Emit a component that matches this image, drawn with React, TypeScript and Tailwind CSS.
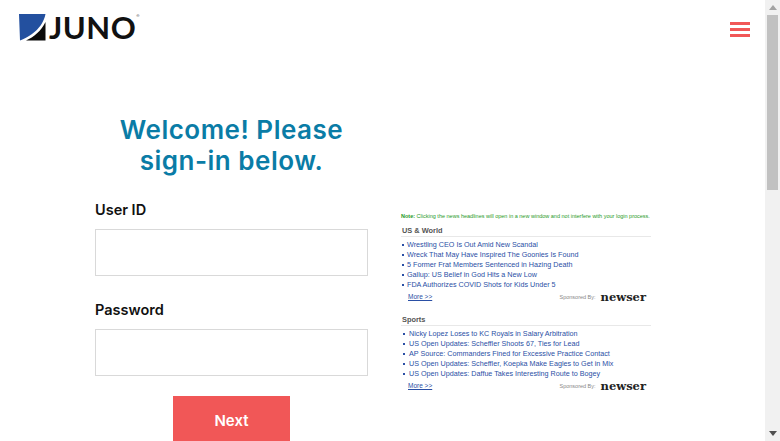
// Juno sign-in page with news headlines panel
const usWorld = [
  'Wrestling CEO Is Out Amid New Scandal',
  'Wreck That May Have Inspired The Goonies Is Found',
  '5 Former Frat Members Sentenced in Hazing Death',
  'Gallup: US Belief in God Hits a New Low',
  'FDA Authorizes COVID Shots for Kids Under 5',
];

const sports = [
  'Nicky Lopez Loses to KC Royals in Salary Arbitration',
  'US Open Updates: Scheffler Shoots 67, Ties for Lead',
  'AP Source: Commanders Fined for Excessive Practice Contact',
  'US Open Updates: Scheffler, Koepka Make Eagles to Get in Mix',
  'US Open Updates: Daffue Takes Interesting Route to Bogey',
];

function Logo() {
  return (
    <div className="flex items-center gap-[3px]">
      <svg width="27" height="27" viewBox="0 0 27 27" className="shrink-0">
        <path d="M0 0H26.5C25 8 20 15 13 20C9 23 5 25 1 26.5Z" fill="#23509f" />
        <path d="M26.5 8V26.5H7C15 23 22 17 26.5 8Z" fill="#0b0b0b" />
      </svg>
      <div className="flex items-start">
        <span className="font-['Lato',sans-serif] text-[31px] leading-none font-bold tracking-[0.5px] text-[#111]">
          JUNO
        </span>
        <span className="mt-[2px] text-[4px] leading-none text-[#555]">®</span>
      </div>
    </div>
  );
}

function NewsBlock({
  title,
  items,
  gap,
  indent,
}: {
  title: string;
  items: string[];
  gap: string;
  indent: string;
}) {
  return (
    <div className="font-['Liberation_Sans',sans-serif]">
      <div className="border-b border-[#e8e8e8] pl-[1px] text-[7.4px] leading-[11px] font-bold text-[#555]">
        {title}
      </div>
      <ul className="mt-[3px]">
        {items.map((item) => (
          <li key={item} className={`flex h-[10px] items-center text-[7.2px] leading-[10px] whitespace-nowrap text-[#2a4fa5] ${indent}`}>
            <span className={`h-[2px] w-[2px] shrink-0 bg-[#2a4fa5] ${gap}`} />
            {item}
          </li>
        ))}
      </ul>
      <div className="mt-[2px] flex items-center justify-between pr-[5px] pl-[7px]">
        <span className="text-[6.5px] text-[#2a4fa5] underline">More &gt;&gt;</span>
        <div className="flex items-center gap-[5px]">
          <span className="text-[5.5px] text-[#888]">Sponsored By:</span>
          <span className="font-['DejaVu_Serif',serif] text-[11.5px] leading-[10px] font-bold text-[#222]">newser</span>
        </div>
      </div>
    </div>
  );
}

export default function App() {
  return (
    <div className="flex h-[441px] w-[780px] overflow-hidden bg-white">
      <main className="w-[765px] shrink-0">
        <header className="flex items-start justify-between pt-[12px] pr-[15px] pl-[19px]">
          <Logo />
          <button className="mt-[10px] flex w-[20px] flex-col gap-[3px]">
            <span className="h-[3px] bg-[#f15757]" />
            <span className="h-[3px] bg-[#f15757]" />
            <span className="h-[3px] bg-[#f15757]" />
          </button>
        </header>

        <div className="mt-[37px] flex items-start pl-[95px]">
          <form className="w-[273px] shrink-0 font-['Inter',sans-serif]">
            <h1 className="mx-auto mt-[34px] w-[240px] text-center text-[26px] leading-[31px] font-semibold tracking-[0.5px] text-[#0a7ca6]">
              Welcome! Please sign-in below.
            </h1>
            <label className="mt-[24px] block text-[14.5px] leading-[20px] font-semibold text-[#111]">User ID</label>
            <div className="mt-[9px] h-[47px] border border-[#d9d9d9]" />
            <label className="mt-[24px] block text-[14.5px] leading-[20px] font-semibold text-[#111]">Password</label>
            <div className="mt-[9px] h-[47px] border border-[#d9d9d9]" />
            <button className="mx-auto mt-[20px] block h-[50px] w-[117px] bg-[#f15757] text-[15px] font-semibold text-white">
              Next
            </button>
          </form>

          <aside className="mt-[132px] ml-[33px] w-[250px]">
            <p className="font-['Liberation_Sans',sans-serif] text-[5.5px] leading-[8px] font-medium whitespace-nowrap text-[#1f9a1f]">
              <b>Note:</b> Clicking the news headlines will open in a new window and not interfere with your login process.
            </p>
            <div className="mt-[5px]">
              <NewsBlock title="US & World" items={usWorld} gap="mr-[3px]" indent="pl-[1px]" />
            </div>
            <div className="mt-[12px]">
              <NewsBlock title="Sports" items={sports} gap="mr-[4px]" indent="pl-[2px]" />
            </div>
          </aside>
        </div>
      </main>

      {/* Scrollbar */}
      <div className="flex w-[15px] shrink-0 flex-col items-center justify-between bg-[#f1f1f1]">
        <div className="flex w-full flex-col items-center">
          <svg width="8" height="5" viewBox="0 0 8 5" className="mt-[5px]">
            <path d="M4 0L8 5H0Z" fill="#a3a3a3" />
          </svg>
          <div className="mt-[5px] h-[175px] w-[11px] bg-[#c1c1c1]" />
        </div>
        <svg width="8" height="5" viewBox="0 0 8 5" className="mb-[5px]">
          <path d="M4 5L8 0H0Z" fill="#505050" />
        </svg>
      </div>
    </div>
  );
}
